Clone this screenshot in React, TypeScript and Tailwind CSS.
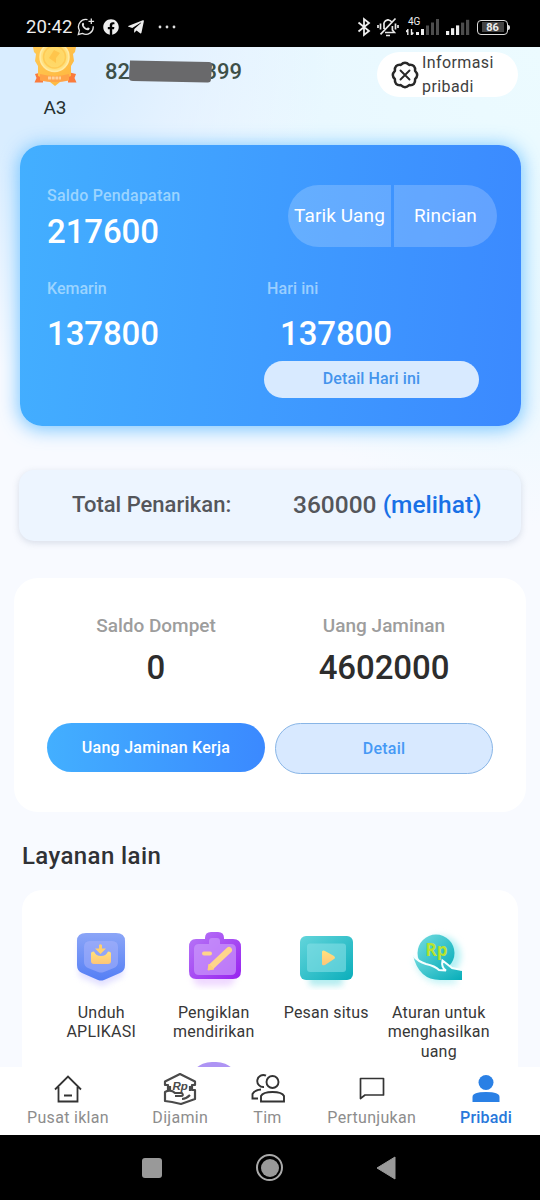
import { FaFacebook, FaTelegramPlane } from "react-icons/fa";

const WhatsappIcon = () => (
  <svg width="18" height="18" viewBox="0 0 18 18" fill="none" stroke="#e4e4e4" strokeWidth="1.3">
    <path d="M10.5 1.7A7.3 7.3 0 0 0 2.4 12.3L1.3 16.5l4.1-1.1A7.3 7.3 0 0 0 16.2 8.3" />
    <path d="M14.3.5v5.6M11.5 3.3h5.6" />
    <path
      d="M5.2 5.3c.8-1 1.5-.6 1.8.5.4.9-.3 1.1-.3 1.5.6 1.4 1.6 2.4 3 3 .6 0 .8-1 1.5-.7 1.9.7 1.9 1.3.7 2.3-2.7 1.7-8.4-3.4-6.7-6.6Z"
      fill="#e4e4e4"
      stroke="none"
    />
  </svg>
);

const BluetoothIcon = () => (
  <svg width="14" height="20" viewBox="0 0 14 20" fill="none" stroke="#eee" strokeWidth="1.8">
    <path d="m1.5 5.500 10.500 8.500L7 18V2l5 4L1.500 14.500" />
  </svg>
);

const MuteIcon = () => (
  <svg width="22" height="20" viewBox="0 0 22 20" fill="none" stroke="#e8e8e8" strokeWidth="1.700">
    <path d="M7 12V8a4 4 0 0 1 8-1.8M15.400 9v4l2 2.500H8M11 2v1.500M9 18.500h4M18.500 1.500 3.500 17.300" />
    <path d="M3.500 6.500v6M1 8v3M18.500 6.500v6M21 8v3" />
  </svg>
);

const SignalIcon = ({ lit }: { lit: number }) => (
  <svg width="24" height="16" viewBox="0 0 24 16">
    {[0, 1, 2, 3, 4].map((i) => (
      <rect key={i} x={i * 5} y={12 - i * 2.8} width="3.2" height={4 + i * 2.8} fill={i < lit ? "#eeeeee" : "#4c4c4c"} />
    ))}
  </svg>
);

const StatusBar = () => (
  <header className="flex h-[47px] shrink-0 items-center bg-black pl-[26px] pr-[30px] pt-[7px] text-[#eeeeee]">
    <span className="mt-px w-[51px] text-[18.5px] leading-none tracking-[0.1px]">20:42</span>
    <WhatsappIcon />
    <FaFacebook className="ml-2 size-[16px]" />
    <FaTelegramPlane className="ml-[8px] size-[18px]" />
    <svg className="ml-[13px]" width="18" height="4" viewBox="0 0 18 4" fill="#ddd">
      <circle cx="2" cy="2" r="1.4" />
      <circle cx="9" cy="2" r="1.4" />
      <circle cx="16" cy="2" r="1.4" />
    </svg>
    <div className="ml-auto flex items-center">
      <BluetoothIcon />
      <div className="ml-[6px]">
        <MuteIcon />
      </div>
      <div className="relative ml-[7px] flex h-4 w-[33px] items-end">
        <svg width="33" height="16" viewBox="0 0 33 16">
          <path d="M1.800 10v6M0 13l1.800-2.500M5.500 10v6l1.800-2.500" stroke="#eee" fill="none" strokeWidth="1.400" />
          <path d="M10 13h3v3h-3zM15 10h3v6h-3z" fill="#eee" />
          <path d="M20 6.500h3v9.500h-3zM25 3.500h3v12.500h-3zM30 0h3v16h-3z" fill="#4c4c4c" />
        </svg>
        <span className="absolute left-[2px] top-[-2px] text-[10px] leading-none">4G</span>
      </div>
      <div className="ml-[7px]">
        <SignalIcon lit={3} />
      </div>
      <div className="ml-[7px] flex h-[15px] w-[31px] items-center justify-center rounded-[4px] border-[1.5px] border-[#ddd]">
        <span className="flex h-[10px] w-[22px] items-center justify-center bg-[#444] text-[11px] font-bold leading-none">86</span>
      </div>
      <div className="h-[5px] w-[2px] rounded-r-sm bg-[#ddd]" />
    </div>
  </header>
);

const Medal = () => (
  <svg width="46" height="40" viewBox="0 0 46 40">
    <defs>
      <linearGradient id="medal" x1="0" y1="0" x2="1" y2="1">
        <stop offset="0" stopColor="#ffca55" />
        <stop offset="1" stopColor="#ffb53c" />
      </linearGradient>
      <radialGradient id="coin">
        <stop offset="0" stopColor="#ffd560" />
        <stop offset="0.7" stopColor="#ffd96a" />
        <stop offset="1" stopColor="#ffe78f" />
      </radialGradient>
    </defs>
    <path d="m3 27 8-2v10.500H2.500l2-4.500ZM44 27l-8-2v10.500h8.500l-2-4.500Z" fill="#fb7b3c" />
    <path d="M1 0h43l-1 5-2 2 1 7-3 5v10l-7 3-4 3-5 4-5-4-5-3-7-3V19l-3-5 1-7-2-2Z" fill="url(#medal)" />
    <circle cx="22.500" cy="10" r="14.500" fill="url(#coin)" stroke="#ffeaa4" strokeWidth="1.500" />
    <circle cx="22.500" cy="10" r="11" fill="none" stroke="#ffcb55" strokeWidth="1.500" />
    <path d="m22 3 6 3-4 5v5l-7-5Z" fill="#ffbd42" opacity=".7" />
    <path d="M8 27q15 4 29 0v6.500q-14 3-29 0Z" fill="#ffa347" />
    <path d="M16 31h13" stroke="#ffd29a" strokeWidth="3" strokeDasharray="3 .7" />
  </svg>
);

const ProfileHeader = () => (
  <section className="flex h-[98px] items-start pl-8 pr-[22px]">
    <div className="flex w-[46px] flex-col items-center">
      <Medal />
      <span className="mt-[10px] text-[19px] leading-[22px] text-[#263030]">A3</span>
    </div>
    <div className="relative ml-[27px] mt-[12px] flex w-[137px] justify-between text-[22px] font-medium leading-[26px] text-[#3e5048]">
      <span>82</span>
      <span>399</span>
      <svg className="absolute left-[24px] top-[1px]" width="84" height="24" viewBox="0 0 84 24">
        <path d="M1 .500 80 2q3 0 3 3l-1 14q0 4-4 3.500L4 21q-4 0-4-3Z" fill="#69696b" />
      </svg>
    </div>
    <div className="ml-auto mt-[5px] flex h-[45px] w-[141px] items-center rounded-full bg-white pl-[14px]">
      <svg width="28" height="28" viewBox="0 0 28 28" fill="none" stroke="#282828" strokeLinejoin="round">
        <path
          d="M14 1.800q2 0 4.200 2.100 3.200-.300 4.700 1.200t1.200 4.700Q26.200 12 26.200 14t-2.100 4.200q.300 3.200-1.200 4.700t-4.700 1.200Q16 26.200 14 26.200t-4.200-2.100q-3.200.300-4.700-1.200t-1.200-4.700Q1.800 16 1.800 14t2.100-4.200q-.300-3.200 1.200-4.700t4.700-1.200Q12 1.800 14 1.800Z"
          strokeWidth="2.500"
        />
        <path d="m9.500 9.500 9 9m0-9-9 9" strokeWidth="1.900" strokeLinecap="round" />
      </svg>
      <span className="ml-[3px] mt-px w-20 text-base leading-[24.500px] tracking-[0.400px] text-[#404040]">Informasi pribadi</span>
    </div>
  </section>
);

const IncomeCard = () => (
  <section className="ml-[20px] mr-[19px] flex h-[281px] rounded-[22px] bg-linear-[95deg] from-[#43afff] to-[#3b89ff] pl-[27px] shadow-[0_2px_18px_2px_rgba(80,182,255,0.72)]">
    <div className="w-[217px] pt-[39px]">
      <p className="text-base font-medium leading-6 tracking-[0.200px] text-[#9bd4ff]">Saldo Pendapatan</p>
      <p className="mt-1 text-[33px] font-medium leading-10 tracking-[-0.100px] text-white">217600</p>
      <p className="mt-[25px] text-base font-medium leading-6 text-[#9bd4ff]">Kemarin</p>
      <p className="mt-[13px] text-[33px] font-medium leading-10 tracking-[-0.100px] text-white">137800</p>
    </div>
    <div className="pt-10">
      <div className="ml-6 flex gap-[3px] text-[19px] tracking-[0.100px] text-white">
        <button className="h-[62px] w-[103px] whitespace-nowrap rounded-l-full bg-white/20">Tarik Uang</button>
        <button className="h-[62px] w-[103px] rounded-r-full bg-white/20">Rincian</button>
      </div>
      <p className="ml-[3px] mt-[30px] text-base font-medium leading-6 tracking-[0.100px] text-[#9bceff]">Hari ini</p>
      <p className="ml-4 mt-[13px] text-[33px] font-medium leading-10 tracking-[-0.100px] text-white">137800</p>
      <button className="mt-[7px] block h-[37px] w-[215px] rounded-full bg-[#d8eaff] pb-px text-base font-medium tracking-[0.100px] text-[#4494ec]">
        Detail Hari ini
      </button>
    </div>
  </section>
);

const WithdrawTotal = () => (
  <section className="mx-[19px] mt-11 flex h-[71px] items-center rounded-[15px] bg-[#edf5ff] pl-[53px] shadow-[0_2px_7px_rgba(100,120,150,0.22)]">
    <span className="-mt-[2px] w-[221px] text-[22px] font-medium text-[#54565b]">Total Penarikan:</span>
    <span className="whitespace-nowrap text-[24.500px] font-medium text-[#54565b]">
      360000 <span className="text-[#1970e6]">(melihat)</span>
    </span>
  </section>
);

const WalletCard = () => (
  <section className="mx-[14px] mt-[37px] h-[234px] rounded-[24px] bg-white px-[33px] pt-[35px]">
    <div className="grid grid-cols-2 gap-x-[10px] text-center">
      <p className="text-[19px] font-medium leading-[26px] text-[#9d9d9d]">Saldo Dompet</p>
      <p className="text-[19px] font-medium leading-[26px] text-[#9d9d9d]">Uang Jaminan</p>
      <p className="mt-[9px] text-[33px] font-medium leading-10 text-[#2d2d2d]">0</p>
      <p className="mt-[9px] text-[33px] font-medium leading-10 tracking-[-0.100px] text-[#2d2d2d]">4602000</p>
      <button className="mt-[35px] h-[49px] rounded-full bg-linear-to-r from-[#43afff] to-[#3b89ff] text-base font-medium tracking-[0.250px] text-white">
        Uang Jaminan Kerja
      </button>
      <button className="mt-[35px] h-[51px] rounded-full border border-[#88b5e6] bg-[#d8e9ff] text-base font-medium tracking-[0.250px] text-[#4699f5]">
        Detail
      </button>
    </div>
  </section>
);

const DownloadIcon = () => (
  <svg width="64" height="64" viewBox="0 0 64 64">
    <defs>
      <linearGradient id="shield" x1="0" y1="0" x2="0" y2="1">
        <stop offset="0" stopColor="#8ba5f7" />
        <stop offset="1" stopColor="#557ff5" />
      </linearGradient>
      <linearGradient id="gold" x1="0" y1="0" x2="0" y2="1">
        <stop offset="0" stopColor="#ffe17d" />
        <stop offset="1" stopColor="#ffc578" />
      </linearGradient>
      <filter id="glow" x="-30%" y="-30%" width="160%" height="160%">
        <feGaussianBlur stdDeviation="3" />
      </filter>
    </defs>
    <path d="M10 16h44v34L33 60 10 50Z" fill="#d8d5ff" opacity=".8" filter="url(#glow)" />
    <path d="M17 7h30q9 0 9 8v24q0 6-5 8L35 54q-3 1-6 0L13 47q-5-2-5-8V15q0-8 9-8Z" fill="url(#shield)" />
    <path d="M21 15h22q6 0 6 6v15q0 4-4 6l-10 4q-3 1-6 0l-10-4q-4-2-4-6V21q0-6 6-6Z" fill="#a8b3fb" opacity=".55" />
    <path d="M25 25.500q2 4.500 7 4.500 5 0 7-4.500 3 0 3 2V35q0 3-3 3H25q-3 0-3-3v-7.500q0-2 3-2Z" fill="url(#gold)" />
    <path d="M30 19q1-1.500 3 0v3.500h4L31.500 28 26 22.500h4Z" fill="#ffcf6e" />
  </svg>
);

const AdvertiserIcon = () => (
  <svg width="64" height="64" viewBox="0 0 64 64">
    <defs>
      <linearGradient id="bag" x1="0" y1="0" x2="1" y2="1">
        <stop offset="0" stopColor="#b778f7" />
        <stop offset="1" stopColor="#9822ef" />
      </linearGradient>
    </defs>
    <rect x="11" y="25" width="42" height="35" rx="8" fill="#e8c8ff" opacity=".7" filter="url(#glow)" />
    <path d="M23 12q0-6 6-6h7q6 0 6 6v1h9q8 0 8 8v24q0 8-8 8H14q-7 0-7-8V21q0-8 7-8h9Z" fill="url(#bag)" />
    <path d="M27 18v-3q0-3 3-3h5q3 0 3 3v3h11q5 0 5 5v21q0 5-5 5H17q-5 0-5-5V23q0-5 5-5Z" fill="#cb99fb" opacity=".7" />
    <path d="M22 27.500h6" stroke="#ffd58b" strokeWidth="4" strokeLinecap="round" />
    <path d="M47 24 30 40" stroke="#ffd58b" strokeWidth="6" strokeLinecap="round" />
    <path d="m27 38-1 6 6-1Z" fill="#ffcf7c" stroke="#ffcf7c" strokeLinejoin="round" />
  </svg>
);

const MessageIcon = () => (
  <svg width="64" height="64" viewBox="0 0 64 64">
    <defs>
      <linearGradient id="screen" x1="0" y1="0" x2="1" y2="1">
        <stop offset="0" stopColor="#63d5db" />
        <stop offset="1" stopColor="#0baebb" />
      </linearGradient>
    </defs>
    <rect x="15" y="32" width="34" height="28" rx="4" fill="#a2e8ec" opacity=".8" filter="url(#glow)" />
    <rect x="6" y="10" width="53" height="44" rx="6" fill="url(#screen)" />
    <rect x="13" y="17.500" width="39" height="28.500" rx="3" fill="#85dfe6" opacity=".6" />
    <path d="M28 25.500q1-1.500 3-.500l9 5q2 2 0 3l-9 6q-3 1-3-1Z" fill="url(#gold)" />
  </svg>
);

const RulesIcon = () => (
  <svg width="64" height="64" viewBox="0 0 64 64">
    <defs>
      <linearGradient id="hand" x1="0" y1="0" x2="1" y2="1">
        <stop offset="0" stopColor="#73dce0" />
        <stop offset="1" stopColor="#07adb9" />
      </linearGradient>
    </defs>
    <circle cx="34" cy="30" r="20" fill="#b6f1f4" filter="url(#glow)" />
    <path d="M6 34q8 22 26 24h18v-6Z" fill="#b6f1f4" opacity=".7" filter="url(#glow)" />
    <circle cx="29" cy="27" r="18.500" fill="url(#hand)" />
    <text x="18.500" y="30" fontFamily="Open Sans" fontSize="17" fontWeight="700" fill="#b9e32d">
      Rp
    </text>
    <path
      d="M6 29.500q5 6 13 8.500 9 2 13 6l7 .500q-5-3-3.500-10Q40 38 45 42l10 2.500V54H33Q12 54 6 29.500Z"
      fill="url(#hand)"
    />
    <path d="M6 29.500q5 6 13 8.500 9 2 13 6l7 .500q-5-3-3.500-10Q40 38 45 42l10 2" fill="none" stroke="#f5ffff" strokeWidth="2" />
  </svg>
);

const services = [
  { label: "Unduh APLIKASI", icon: <DownloadIcon /> },
  { label: "Pengiklan mendirikan", icon: <AdvertiserIcon /> },
  { label: "Pesan situs", icon: <MessageIcon /> },
  { label: "Aturan untuk menghasilkan uang", icon: <RulesIcon /> },
];

const Services = () => (
  <section>
    <h2 className="ml-[22px] mt-[28px] text-[24px] font-medium leading-8 tracking-[0.400px] text-[#303135]">Layanan lain</h2>
    <div className="mx-[22px] mt-[18px] rounded-t-[20px] bg-white px-[23px] pt-9">
      <div className="grid h-[136px] grid-cols-4">
        {services.map(({ label, icon }) => (
          <div key={label} className="flex flex-col items-center">
            {icon}
            <p className="mt-[13px] w-[110px] text-center text-base leading-[19.300px] tracking-[0.220px] text-[#373737]">{label}</p>
          </div>
        ))}
      </div>
      <div className="ml-[143px] h-12 w-[52px] rounded-[26px] bg-[#ae94f4]" />
    </div>
  </section>
);

const HomeIcon = () => (
  <svg width="28" height="28" viewBox="0 0 28 28" fill="none" stroke="#333" strokeWidth="1.800">
    <path d="M1 14.500 14 1.500l13 13M4.500 12v14.500h19V12M10 20.500h8" />
  </svg>
);

const GuaranteeIcon = () => (
  <svg width="34" height="34" viewBox="0 0 34 34" fill="none" stroke="#4a4a4a" strokeWidth="2.200" strokeLinejoin="round">
    <path d="M5 18v-5H2V9.500L17 2l15 7.500V13h-3v5h3v9l-14 5-9-2-7-1V20q6-3 10 1h7q2 3-1 3h-6" />
    <path d="M7 14v5M27 14v5M19 27q4 0 8-4" />
    <text x="9.500" y="17.500" fontFamily="Liberation Sans" fontSize="11.500" fontWeight="700" fontStyle="italic" fill="#4a4a4a" stroke="none">
      Rp
    </text>
  </svg>
);

const TeamIcon = () => (
  <svg width="34" height="32" viewBox="0 0 34 32" fill="none" stroke="#333" strokeWidth="1.900">
    <circle cx="21.500" cy="9" r="6" />
    <path d="M15 2.700A6 6 0 1 0 13 14M10 28.500V23q2-4 11.500-4T33 23v5.500ZM7 25.500H1.500V21q2-4 8.500-4.500" />
  </svg>
);

const ChatIcon = () => (
  <svg width="28" height="28" viewBox="0 0 28 28" fill="none" stroke="#333" strokeWidth="1.700" strokeLinejoin="round">
    <path d="M2.500 3.500h23v16.500H7l-4.500 3.500Z" />
  </svg>
);

const ProfileIcon = () => (
  <svg width="30" height="30" viewBox="0 0 30 30" fill="#2a80e5">
    <circle cx="15" cy="8.500" r="7.500" />
    <path d="M1.500 28V23q0-5 13.500-5t13.500 5v5Z" />
  </svg>
);

const tabs = [
  { label: "Pusat iklan", icon: <HomeIcon />, width: "w-[82px]" },
  { label: "Dijamin", icon: <GuaranteeIcon />, width: "w-[56px]" },
  { label: "Tim", icon: <TeamIcon />, width: "w-[32px]" },
  { label: "Pertunjukan", icon: <ChatIcon />, width: "w-[90px]" },
  { label: "Pribadi", icon: <ProfileIcon />, width: "w-[52px]", active: true },
];

const TabBar = () => (
  <nav className="flex h-[68px] shrink-0 justify-between bg-white pl-[27px] pr-[28px]">
    {tabs.map(({ label, icon, width, active }) => (
      <div key={label} className={`flex flex-col items-center ${width}`}>
        <div className="flex h-[41px] items-center pt-[3px]">{icon}</div>
        <span
          className={`whitespace-nowrap text-base leading-5 ${active ? "font-medium tracking-[0.200px] text-[#2878db]" : "tracking-[0.300px] text-[#8d8d8d]"}`}
        >
          {label}
        </span>
      </div>
    ))}
  </nav>
);

const SystemNav = () => (
  <footer className="flex h-[65px] shrink-0 items-center bg-black pl-[142px]">
    <div className="size-[20px] rounded-[3px] bg-[#999]" />
    <div className="ml-[94px] flex size-[27px] items-center justify-center rounded-full border-2 border-[#aaa]">
      <div className="size-[18px] rounded-full bg-[#999]" />
    </div>
    <svg className="ml-[93px]" width="20" height="24" viewBox="0 0 20 24">
      <path d="m1 12 18-11v22Z" fill="#999" stroke="#999" strokeLinejoin="round" />
    </svg>
  </footer>
);

const App = () => (
  <div className="flex h-[1200px] w-[540px] flex-col overflow-hidden font-[Roboto,sans-serif]">
    <StatusBar />
    <main className="h-[1020px] shrink-0 overflow-hidden bg-[#f8faff] bg-[radial-gradient(ellipse_330px_320px_at_0_0,#d9edff_0%,#d9edff_30%,transparent_100%),radial-gradient(ellipse_380px_480px_at_100%_0,#ecfbff_0%,#e9f8ff_60%,transparent_100%)]">
      <ProfileHeader />
      <IncomeCard />
      <WithdrawTotal />
      <WalletCard />
      <Services />
    </main>
    <TabBar />
    <SystemNav />
  </div>
);

export default App;
